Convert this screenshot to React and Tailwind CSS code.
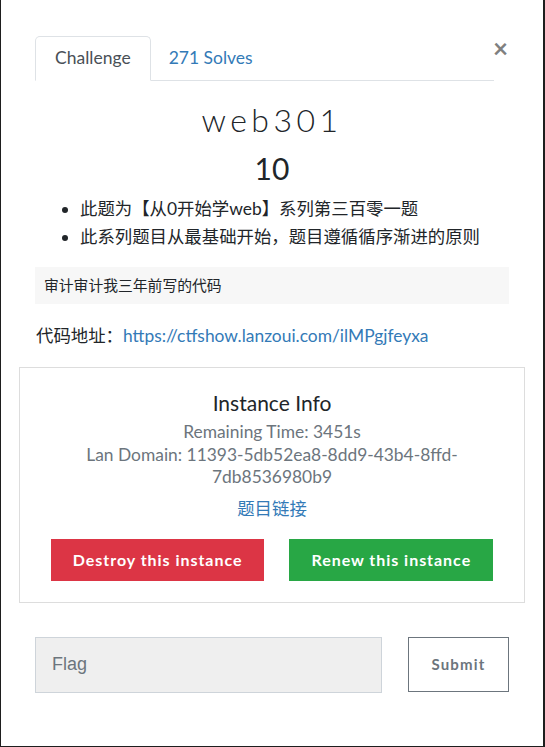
export default function App() {
  return (
    <div className="min-h-screen bg-[#1e1e1e] pl-px pr-[2px] pb-px font-['Lato','Noto_Sans_CJK_SC',sans-serif] text-[#212529]">
      <div className="relative h-[746px] bg-white px-[18px] pt-[36px]">
        <button className="absolute right-[35px] top-[35px] text-[26px] font-bold leading-none text-[#808080]">
          ×
        </button>

        <div className="ml-[16px] mr-[31px] flex border-b border-[#dee2e6] text-[17.5px]">
          <div className="-mb-px flex h-[45px] items-center rounded-t-[5px] border border-[#dee2e6] border-b-white bg-white px-[19px] text-[#495057]">
            Challenge
          </div>
          <div className="flex h-[44px] items-center px-[18px] text-[#337ab7]">271 Solves</div>
        </div>

        <div className="mx-[17px] text-center">
          <h2 className="mt-[19px] text-[32px] font-light leading-[40px] tracking-[0.14em]">web301</h2>
          <h3 className="mt-[10px] text-[30px] leading-[36px]">10</h3>
        </div>

        <ul className="mx-[17px] mt-[9px] list-disc pl-[44px] text-[17.4px] leading-[28px]">
          <li>此题为【从0开始学web】系列第三百零一题</li>
          <li>此系列题目从最基础开始，题目遵循循序渐进的原则</li>
        </ul>

        <div className="mx-[16px] mt-[16px] flex h-[37px] items-center bg-[#f7f7f7] px-[9px] text-[14.8px]">
          审计审计我三年前写的代码
        </div>

        <p className="mx-[17px] mt-[18px] text-[17.4px] leading-[28px]">
          代码地址：<a className="text-[#337ab7]">https://ctfshow.lanzoui.com/ilMPgjfeyxa</a>
        </p>

        <div className="mt-[17px] border border-[#dddddd] px-[20px] pb-[21px] pt-[21px] text-center">
          <h4 className="text-[21px] leading-[28px]">Instance Info</h4>
          <div className="mt-[4px] px-[40px] text-[17.4px] leading-[22.5px] text-[#6c757d]">
            <div>Remaining Time: 3451s</div>
            <div>Lan Domain: 11393-5db52ea8-8dd9-43b4-8ffd-7db8536980b9</div>
          </div>
          <a className="mt-[9px] block text-[17.4px] leading-[22px] text-[#337ab7]">题目链接</a>
          <div className="mt-[19px] flex justify-center gap-[25px]">
            <button className="h-[42px] bg-[#dc3545] px-[22px] text-[16px] font-bold tracking-[0.06em] text-white">
              Destroy this instance
            </button>
            <button className="h-[42px] bg-[#28a745] px-[22px] text-[16px] font-bold tracking-[0.06em] text-white">
              Renew this instance
            </button>
          </div>
        </div>

        <div className="mx-[16px] mt-[34px] flex gap-[26px]">
          <div className="flex h-[56px] flex-1 items-center border border-[#ced4da] bg-[#efefef] px-[16px] font-['Liberation_Sans',sans-serif] text-[18px] text-[#6c757d]">
            Flag
          </div>
          <button className="h-[55px] w-[101px] border border-[#6c757d] text-[15px] font-bold tracking-[0.08em] text-[#6c757d]">
            Submit
          </button>
        </div>
      </div>
    </div>
  );
}
